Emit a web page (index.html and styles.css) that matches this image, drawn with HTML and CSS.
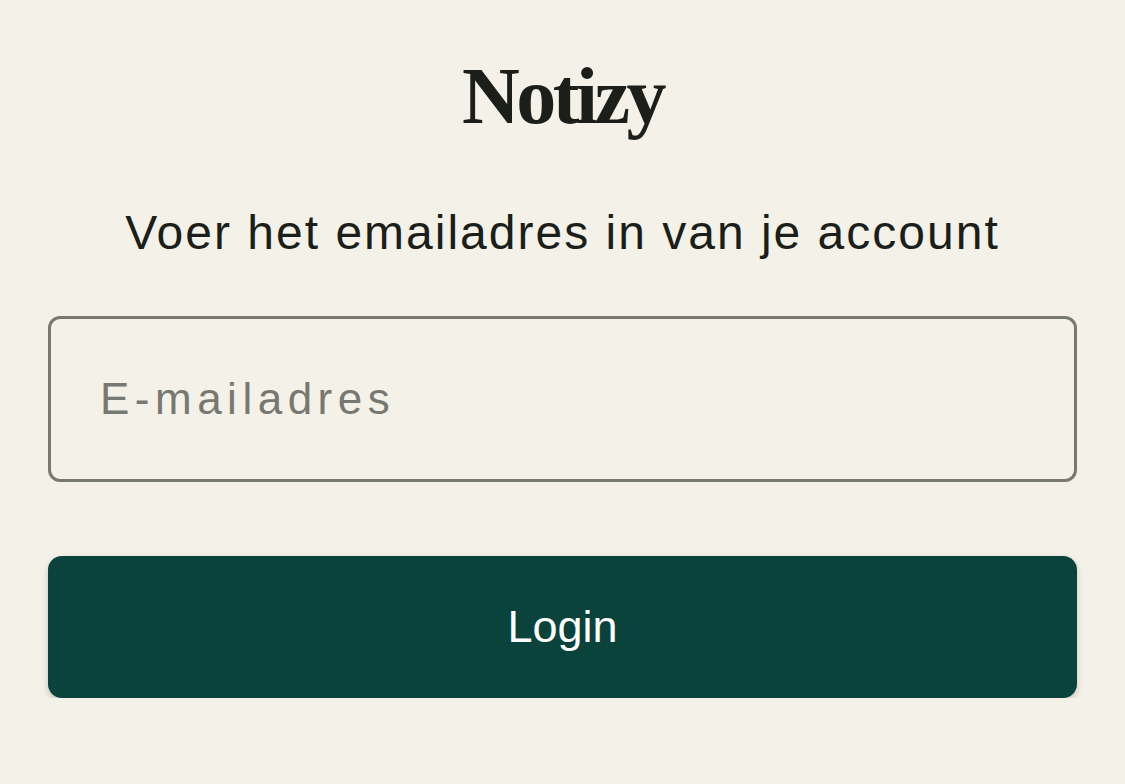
FILE: index.html
```html
<!DOCTYPE html>
<html lang="nl">
<head>
  <meta charset="UTF-8" />
  <meta name="viewport" content="width=device-width, initial-scale=1" />
  <title>Notizy</title>
  <link rel="stylesheet" href="styles.css">
</head>
<body>
  <main class="login">
    <h1 class="brand">Notizy</h1>
    <p class="intro">Voer het emailadres in van je account</p>
    <input type="email" class="field" placeholder="E-mailadres" />
    <button class="primary">Login</button>
  </main>
</body>
</html>
```

FILE: styles.css
```css
body { margin: 0; background-color: #f4f2e8; color: #1b1e19; font-family: "Liberation Sans", Arial, sans-serif; }
.login { display: flex; flex-direction: column; padding: 48px 48px 0; }
.brand {
  margin: 0; text-align: center; font-family: "Liberation Serif", serif;
  font-size: 80px; line-height: 96px; font-weight: bold; letter-spacing: -3.5px;
}
.intro { margin: 59px 0 0; text-align: center; font-size: 48px; line-height: 60px; letter-spacing: 2px; }
.field {
  margin-top: 53px; height: 166px; box-sizing: border-box; padding: 0 0 0 49px;
  border: 3px solid #777a72; border-radius: 12px; background: transparent;
  font-family: "Liberation Sans", Arial, sans-serif; font-size: 44px; letter-spacing: 5.5px; color: #1b1e19;
}
.field::placeholder { color: #777870; }
.primary {
  margin-top: 74px; height: 142px; border: none; border-radius: 14px;
  background-color: #0a433c; color: #ffffff; font-family: "Liberation Sans", Arial, sans-serif;
  font-size: 45px; box-shadow: 0 3px 6px rgba(0, 0, 0, 0.2); cursor: pointer;
}
```
